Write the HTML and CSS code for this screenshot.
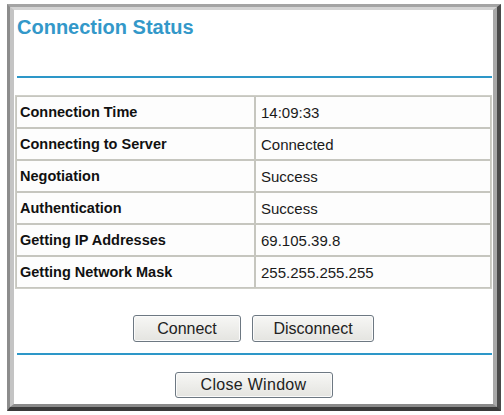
FILE: index.html
```html
<!DOCTYPE html>
<html>
<head>
<meta charset="utf-8">
<link rel="stylesheet" href="styles.css">
</head>
<body>
<div class="frame">
  <div class="bevel">
    <div class="content">
      <h1 class="title">Connection Status</h1>
      <div class="rule rule-top"></div>
      <table class="status">
        <tr><th>Connection Time</th><td>14:09:33</td></tr>
        <tr><th>Connecting to Server</th><td>Connected</td></tr>
        <tr><th>Negotiation</th><td>Success</td></tr>
        <tr><th>Authentication</th><td>Success</td></tr>
        <tr><th>Getting IP Addresses</th><td>69.105.39.8</td></tr>
        <tr><th>Getting Network Mask</th><td>255.255.255.255</td></tr>
      </table>
      <div class="actions">
        <button class="btn btn-connect">Connect</button>
        <button class="btn btn-disconnect">Disconnect</button>
      </div>
      <div class="rule rule-bottom"></div>
      <div class="actions actions-close">
        <button class="btn btn-close">Close Window</button>
      </div>
    </div>
  </div>
</div>
</body>
</html>
```

FILE: styles.css
```css
html, body {
  margin: 0;
  padding: 0;
  background: #ffffff;
}

body {
  font-family: "Liberation Sans", Arial, sans-serif;
  color: #111;
}

.frame {
  margin: 4px 0 0 7px;
  width: 494px;
  box-sizing: border-box;
  border-style: solid;
  border-width: 3px 4px 4px 3px;
  border-color: #a4a4a4 #4a4a4a #3a3a3a #8c8c8c;
}

.bevel {
  border-style: solid;
  border-width: 3px 4px 3px 4px;
  border-color: #d4d4d4 #a8a8a8 #8a8a8a #c4c4c4;
  background: #ffffff;
}

.content {
  padding: 6px 0 6px 0;
}

.title {
  margin: 0 0 0 3px;
  font-size: 20px;
  line-height: 22px;
  font-weight: bold;
  color: #3398c9;
}

.rule {
  height: 2px;
  background: #2d97c8;
  margin-left: 3px;
  margin-right: 1px;
}

.rule-top {
  margin-top: 38px;
}

.status {
  margin: 17px 1px 0 1px;
  width: 477px;
  border-collapse: separate;
  border-spacing: 0;
  border: 1px solid #cfcfc8;
  table-layout: fixed;
}

.status th,
.status td {
  height: 32px;
  box-sizing: border-box;
  border: 1px solid #c6c6bf;
  background: #fdfdfd;
  text-align: left;
  vertical-align: middle;
  padding: 0 0 0 3px;
}

.status th {
  width: 239px;
  font-size: 14.5px;
  font-weight: bold;
  color: #111;
}

.status td {
  font-size: 15px;
  font-weight: normal;
  padding-left: 5px;
  color: #1a1a1a;
}

.actions {
  display: flex;
  justify-content: center;
  gap: 11px;
  margin-top: 26px;
}

.rule-bottom {
  margin-top: 11px;
}

.actions-close {
  margin-top: 17px;
}

.btn {
  font-family: "Liberation Sans", Arial, sans-serif;
  font-size: 16px;
  color: #222;
  height: 27px;
  padding: 0;
  border: 1px solid #6d7882;
  border-radius: 3px;
  background: linear-gradient(#f7f7f5, #e4e4e0);
  box-shadow: inset 0 0 0 1px #fbfbfb;
}

.btn-connect {
  width: 108px;
}

.btn-disconnect {
  width: 122px;
}

.btn-close {
  width: 158px;
  height: 26px;
  letter-spacing: 0.3px;
}
```
